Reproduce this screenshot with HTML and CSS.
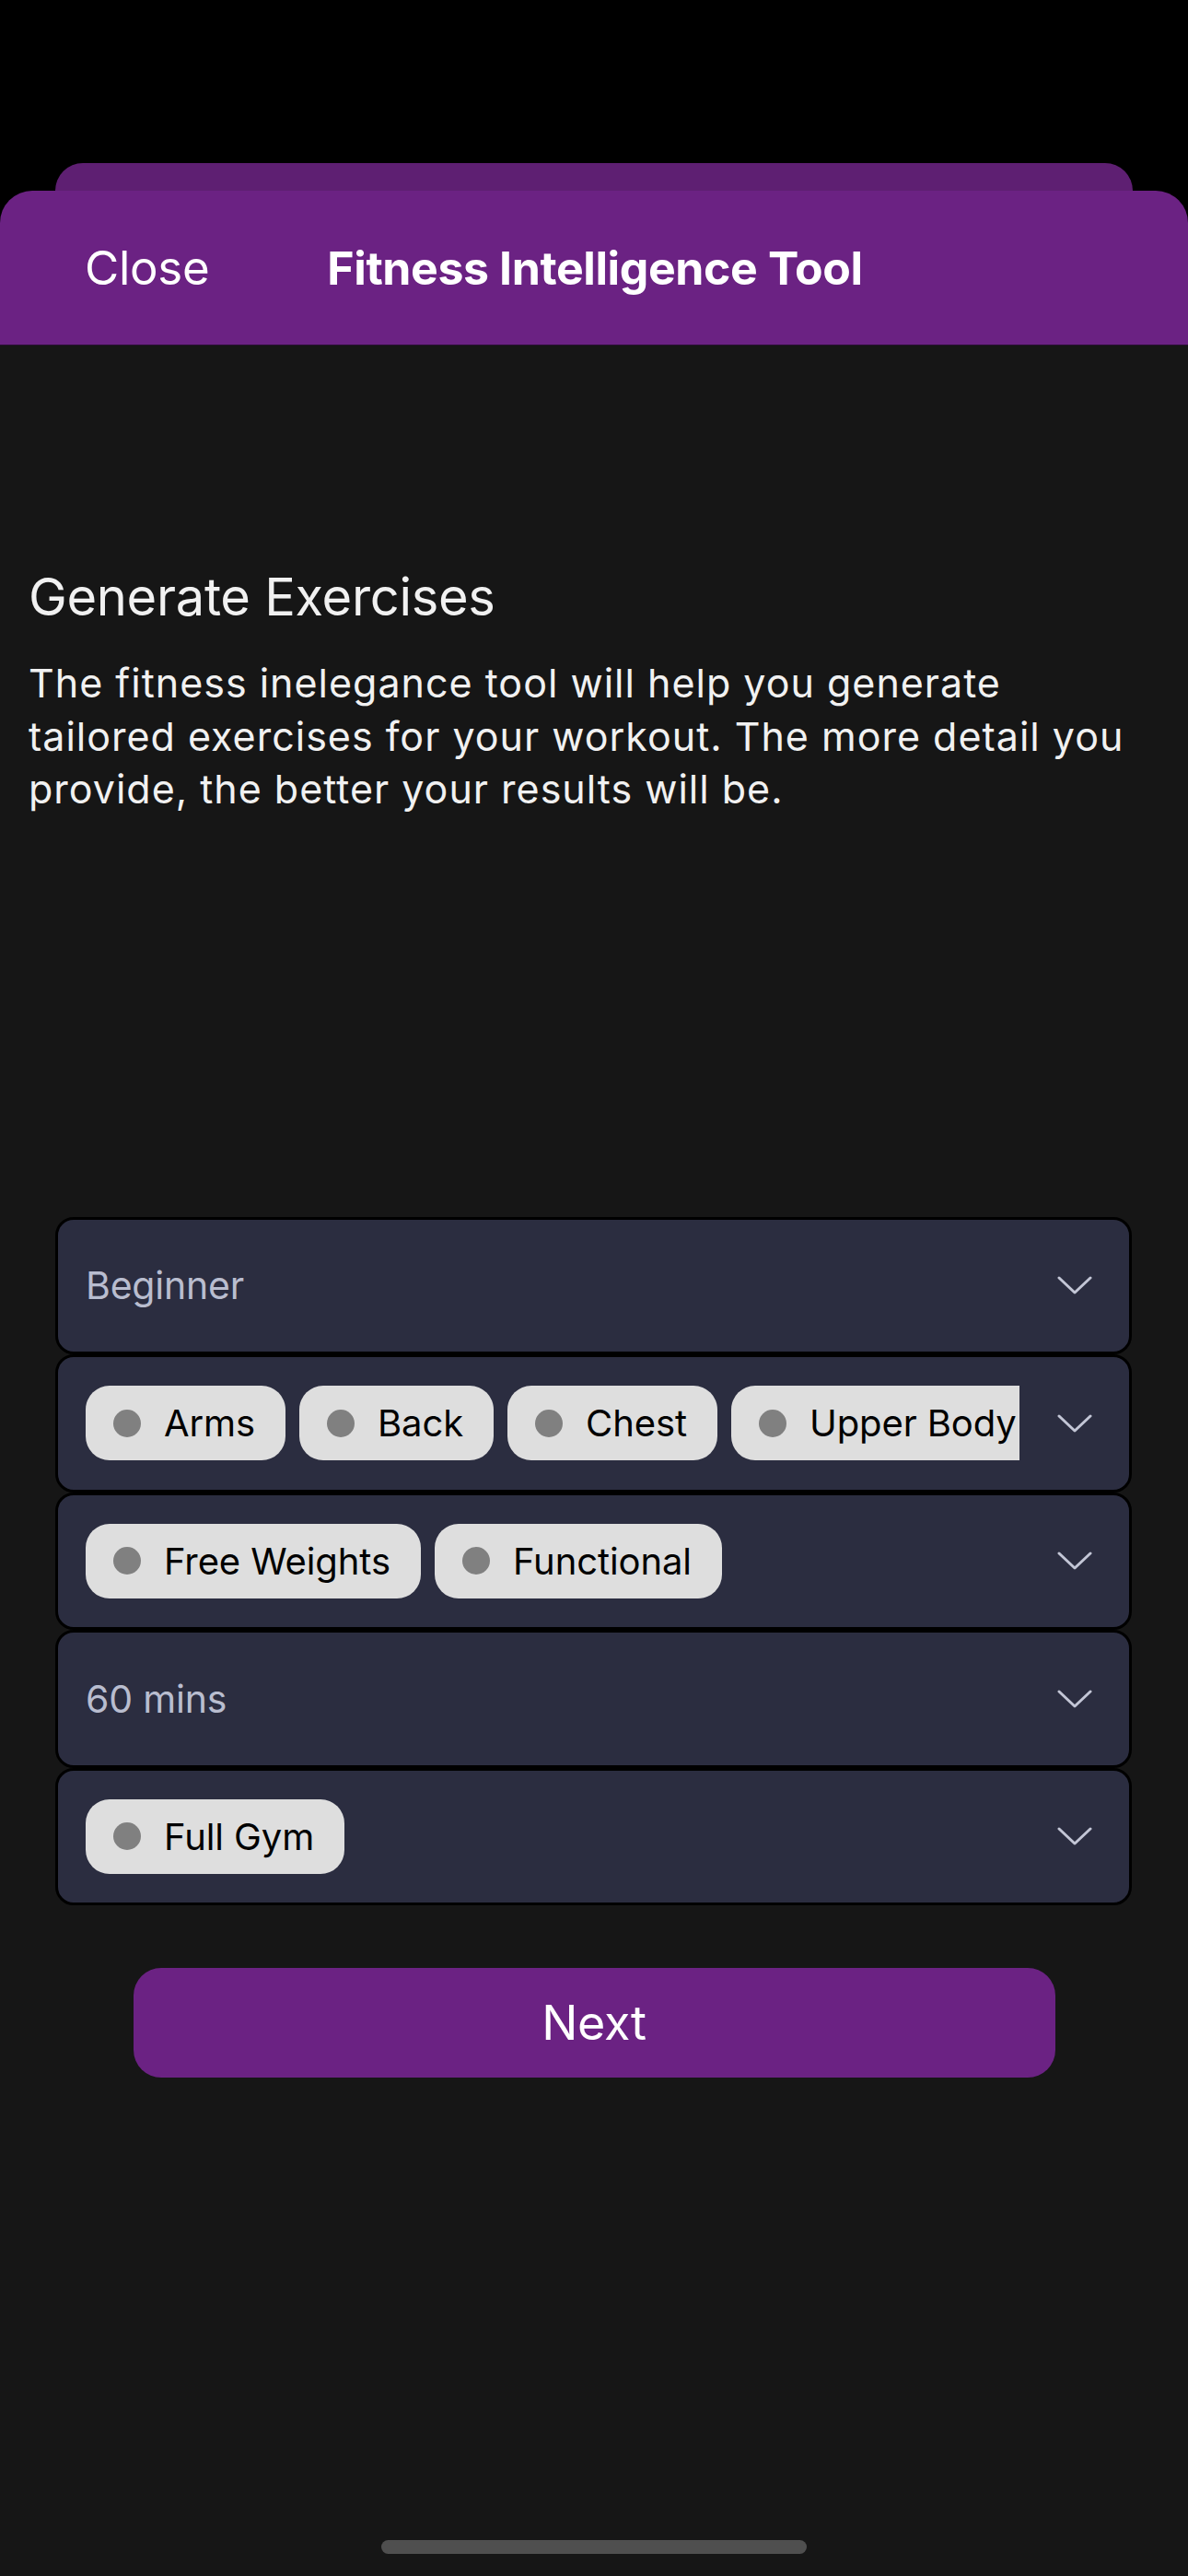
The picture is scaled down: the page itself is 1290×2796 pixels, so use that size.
FILE: index.html
```html
<!DOCTYPE html>
<html lang="en">
<head>
<meta charset="utf-8">
<title>Fitness Intelligence Tool</title>
<link rel="stylesheet" href="styles.css">
</head>
<body>
<div class="page">
  <div class="top">
    <div class="sheet-back"></div>
    <header class="sheet-header">
      <span class="close">Close</span>
      <span class="title">Fitness Intelligence Tool</span>
    </header>
  </div>

  <main class="main">
    <section class="intro">
      <h1 class="heading">Generate Exercises</h1>
      <p class="lead">The fitness inelegance tool will help you generate tailored exercises for your workout. The more detail you provide, the better your results will be.</p>
    </section>

    <section class="fields">
      <div class="dropdown">
        <div class="value"><span class="placeholder">Beginner</span></div>
        <svg class="chevron" viewBox="0 0 38 20"><path d="M2 2 L19 18 L36 2"/></svg>
      </div>
      <div class="dropdown">
        <div class="value">
          <span class="chip"><span class="dot"></span>Arms</span>
          <span class="chip"><span class="dot"></span>Back</span>
          <span class="chip"><span class="dot"></span>Chest</span>
          <span class="chip"><span class="dot"></span>Upper Body</span>
        </div>
        <svg class="chevron" viewBox="0 0 38 20"><path d="M2 2 L19 18 L36 2"/></svg>
      </div>
      <div class="dropdown">
        <div class="value">
          <span class="chip"><span class="dot"></span>Free Weights</span>
          <span class="chip"><span class="dot"></span>Functional</span>
        </div>
        <svg class="chevron" viewBox="0 0 38 20"><path d="M2 2 L19 18 L36 2"/></svg>
      </div>
      <div class="dropdown">
        <div class="value"><span class="placeholder">60 mins</span></div>
        <svg class="chevron" viewBox="0 0 38 20"><path d="M2 2 L19 18 L36 2"/></svg>
      </div>
      <div class="dropdown">
        <div class="value">
          <span class="chip"><span class="dot"></span>Full Gym</span>
        </div>
        <svg class="chevron" viewBox="0 0 38 20"><path d="M2 2 L19 18 L36 2"/></svg>
      </div>
    </section>

    <button class="next" type="button">Next</button>
  </main>

  <div class="home-indicator"></div>
</div>
</body>
</html>
```

FILE: styles.css
```css
* {
  box-sizing: border-box;
}

html, body {
  margin: 0;
  padding: 0;
  background: #161616;
}

body {
  font-family: "Inter", "Noto Sans", "Liberation Sans", sans-serif;
  color: #f1f1f1;
}

.page {
  width: 1290px;
  min-height: 2796px;
  display: flex;
  flex-direction: column;
  background: #161616;
}

.top {
  background: #000;
  padding-top: 177px;
}

.sheet-back {
  margin: 0 60px;
  height: 30px;
  background: #5e1f72;
  border-radius: 30px 30px 0 0;
}

.sheet-header {
  height: 168px;
  background: #6b2283;
  border-radius: 35px 35px 0 0;
  display: flex;
  align-items: center;
  padding-left: 92px;
  gap: 128px;
  color: #fff;
  border-bottom: 1px solid #2a0f33;
}

.close {
  font-size: 51px;
  font-weight: 400;
  letter-spacing: -0.3px;
}

.title {
  font-size: 50px;
  font-weight: 700;
  letter-spacing: -0.4px;
}

.main {
  flex: 1;
  display: flex;
  flex-direction: column;
}

.intro {
  padding: 0 31px;
  margin-top: 239px;
}

.heading {
  margin: 0;
  font-size: 56px;
  line-height: 68px;
  font-weight: 400;
  color: #f1f1f1;
  letter-spacing: -0.3px;
}

.lead {
  margin: 31px 0 0;
  font-size: 43px;
  line-height: 57.5px;
  font-weight: 400;
  color: #f1f1f1;
  letter-spacing: 1px;
}

.fields {
  margin: 435px 61px 0 60px;
  display: flex;
  flex-direction: column;
}

.dropdown {
  height: 149.5px;
  background: #2b2d40;
  border: 3px solid #000;
  border-radius: 20px;
  display: flex;
  align-items: center;
  padding: 0 40px 0 30px;
}

.value {
  flex: 1;
  min-width: 0;
  display: flex;
  align-items: center;
  gap: 15px;
  overflow: hidden;
}

.placeholder {
  font-size: 41px;
  color: #b9bdcf;
  letter-spacing: -0.2px;
}

.chip {
  flex-shrink: 0;
  height: 81px;
  display: inline-flex;
  align-items: center;
  gap: 25px;
  padding: 0 33px 0 30px;
  border-radius: 26px;
  background: #dedede;
  color: #000;
  font-size: 40px;
  letter-spacing: -0.1px;
  white-space: nowrap;
}

.dot {
  width: 30px;
  height: 30px;
  border-radius: 50%;
  background: #808080;
  flex-shrink: 0;
}

.chevron {
  width: 38px;
  height: 20px;
  margin-left: 41px;
  flex-shrink: 0;
  fill: none;
  stroke: #c3c6d6;
  stroke-width: 3;
  stroke-linecap: round;
  stroke-linejoin: round;
}

.next {
  align-self: center;
  width: 1001px;
  height: 119px;
  margin-top: 68px;
  border: none;
  border-radius: 30px;
  background: #6b2283;
  color: #fff;
  font-family: inherit;
  font-size: 52px;
  font-weight: 400;
  letter-spacing: -0.3px;
  padding: 0;
}

.home-indicator {
  align-self: center;
  width: 462px;
  height: 15px;
  border-radius: 8px;
  background: #4f4f4f;
  margin-bottom: 24px;
}
```
